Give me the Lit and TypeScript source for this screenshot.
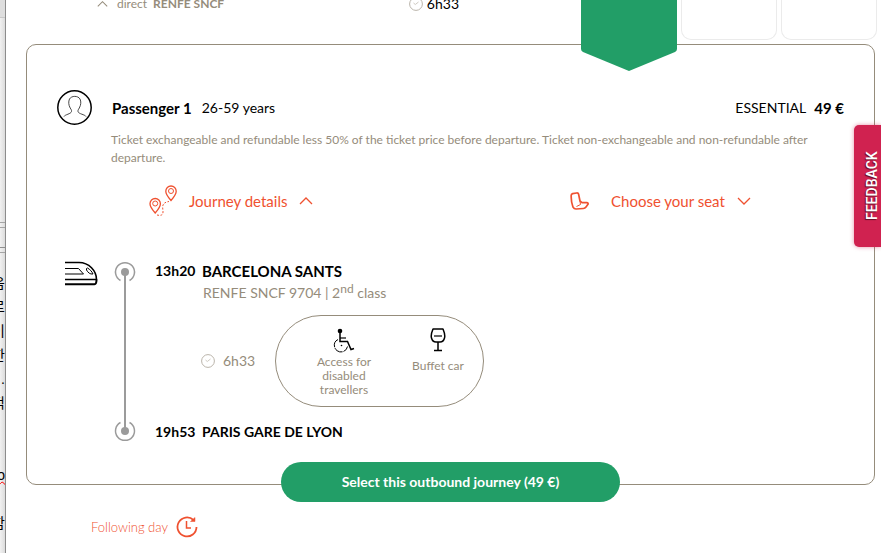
import { LitElement, html, css, svg } from "lit";
import { customElement, property, state } from "lit/decorators.js";

const chevronUp = svg`<path d="M1 7 L7 1 L13 7" fill="none" stroke="currentColor" stroke-width="1.3" />`;
const chevronDown = svg`<path d="M1 1 L7 7 L13 1" fill="none" stroke="currentColor" stroke-width="1.3" />`;

const clock = html`<svg width="14" height="14" viewBox="0 0 14 14" fill="none" stroke="#bab4aa" aria-hidden="true">
  <circle cx="7" cy="7" r="6.4" /><path d="M4.5 6 L6.3 7.5 L9.5 5" stroke="#cfcac2" />
</svg>`;

@customElement("background-window")
export class BackgroundWindow extends LitElement {
  static styles = css`
    :host {
      display: flex;
      flex-direction: column;
      flex: 0 0 6px;
      box-sizing: border-box;
      overflow: hidden;
      border-right: 1px solid #8c8c8c;
      background: linear-gradient(to right, #f1f1f1, #dcdcdc);
      font: 14px/24px "Liberation Sans", "Noto Sans CJK KR", sans-serif;
      color: #000;
    }
    .title { height: 17px; border-bottom: 1px solid #c8c8c8; background: #dedede; }
    .pane { height: 204px; border-bottom: 1px solid #a5a5a5; }
    .bar { height: 4px; border-bottom: 1px solid #a5a5a5; }
    .tools { height: 19px; border-bottom: 1px solid #8f8f8f; }
    .text { display: flex; flex-direction: column; align-items: flex-end; padding-top: 18px; }
    .line { height: 24px; white-space: nowrap; }
    .typo { text-decoration: underline wavy #f00 1px; }
  `;
  render() {
    const lines = ["음", "로", "이", "한", ".", "적", "", "", "To", "", "함"];
    return html`
      <div class="title"></div>
      <div class="pane"></div>
      <div class="bar"></div>
      <div class="tools"></div>
      <div class="bar"></div>
      <div class="text">${lines.map((t) => html`<span class="line ${t === "To" ? "typo" : ""}">${t}</span>`)}</div>
    `;
  }
}

@customElement("stop-line")
export class StopLine extends LitElement {
  @property() time = "";
  @property() place = "";
  static styles = css`
    :host { display: flex; gap: 6px; font-weight: 700; font-size: 14px; line-height: 20px; color: #000; }
    :host([departure]) .place { font-size: 15px; }
    .time { width: 41px; white-space: nowrap; }
  `;
  render() {
    return html`<span class="time">${this.time}</span><span class="place">${this.place}</span>`;
  }
}

@customElement("app-root")
export class AppRoot extends LitElement {
  @state() private open = true;

  static styles = css`
    :host {
      display: flex;
      position: relative;
      min-height: 100vh;
      overflow: hidden;
      background: #fff;
      color: #000;
      font: 14px/18px Lato, "Liberation Sans", sans-serif;
    }
    * { box-sizing: border-box; }
    svg { display: block; flex: none; }
    button {
      font: inherit;
      color: inherit;
      border: 0;
      padding: 0;
      background: none;
      cursor: pointer;
    }
    main { flex: 1; min-width: 0; padding: 0 6px 0 20px; }

    .fares { display: flex; justify-content: space-between; height: 44px; margin-right: -2px; }
    .trip { display: flex; flex: 1; justify-content: space-between; height: 20px; margin: -6px 122px 0 71px; line-height: 20px; }
    .train { display: flex; align-items: center; gap: 9px; font-size: 12px; color: #958c7b; }
    .train .names { display: flex; gap: 6px; }
    .time { display: flex; align-items: center; gap: 4px; }
    .cells { display: flex; gap: 4px; }
    .cell { width: 96px; height: 40px; border: 1px solid #ebebeb; border-top: 0; border-radius: 0 0 10px 10px; }
    .chosen { position: relative; width: 96px; height: 44px; }
    .flag { position: absolute; top: 0; left: 0; }

    .card { border: 1px solid #958c7b; border-radius: 10px; padding-top: 45px; }
    .passenger { display: flex; align-items: center; height: 35px; padding: 0 30px; }
    .who { margin-left: 20px; font-size: 15px; font-weight: 700; }
    .age { margin-left: 10px; flex: 1; }
    .price { margin-left: 8px; font-size: 15px; font-weight: 700; }
    .terms { margin: 6px 30px 0 84px; font-size: 12px; color: #958c7b; }

    .options { display: grid; grid-template-columns: 1fr 1fr; margin: 16px 5px 0 0; color: #ef5130; }
    .option { display: flex; align-items: center; height: 36px; margin-left: 122px; justify-self: start; }
    .option svg:last-child { margin-left: 12px; }
    .option span { font-size: 15px; margin-left: 11px; }
    .seat span { margin-left: 21px; }

    .journey { display: flex; align-items: stretch; padding: 42px 30px 0 37px; }
    .rail { display: flex; flex-direction: column; align-items: center; width: 22px; margin-left: 16px; }
    .rail .bar { flex: 1; width: 2px; background: #9b9b9b; margin: -12px 0; }
    .stops { margin-left: 19px; }
    .service { margin: 2px 0 0 48px; line-height: 20px; color: #958c7b; }
    .service sup { font-size: 12px; line-height: 0; vertical-align: 5px; }
    .middle { display: flex; align-items: center; margin: 12px 0 15px 46px; color: #958c7b; }
    .middle .length { margin-left: 8px; width: 52px; }
    .onboard {
      display: flex;
      width: 209px;
      height: 92px;
      padding: 12px 6px 0 30px;
      border: 1px solid #958c7b;
      border-radius: 46px;
      font-size: 12px;
      line-height: 14px;
      text-align: center;
    }
    .service-item { display: flex; flex-direction: column; align-items: center; width: 76px; gap: 2px; }
    .service-item + .service-item { margin-left: 18px; gap: 7px; }

    .choose {
      display: block;
      width: 40%;
      height: 40px;
      margin: 20px auto -18px;
      border-radius: 20px;
      background: #229e67;
      color: #fff;
      font-weight: 700;
      position: relative;
    }
    .next {
      display: inline-flex;
      align-items: center;
      gap: 8px;
      margin: 31px 0 0 65px;
      color: #ef5130;
      font-size: 13px;
      font-weight: 300;
      text-decoration: none;
    }
    .feedback {
      position: absolute;
      right: 0;
      top: 125px;
      width: 27px;
      height: 122px;
      padding-right: 9px;
      display: flex;
      align-items: center;
      justify-content: center;
      writing-mode: vertical-rl;
      transform: rotate(180deg);
      border-radius: 0 5px 5px 0;
      background: #d02250;
      color: #fff;
      font: 500 14px/18px Roboto, sans-serif;
      box-shadow: 0 0 4px #d0225080;
      text-shadow: -1px -1px 1px #0008;
    }
  `;

  private passengerIcon = html`<svg width="35" height="35" viewBox="0 0 35 35" fill="none" stroke="#000" aria-hidden="true">
    <circle cx="17.5" cy="17.5" r="16.7" stroke-width="1.5" />
    <path stroke="#333" stroke-width="0.9" d="M7 26.5 C8 24.5 14 24 14.5 21.5 C14.8 20 14 19.5 13.2 18 C11.5 15 11.3 11.5 12.5 9 C14.5 5.5 21 5.5 23 9 C24.3 11.5 24 15 22.3 18 C21.5 19.5 20.8 20 21 21.5 C21.5 24 28 24.5 29 26.5" />
  </svg>`;

  private routeIcon = html`<svg width="29" height="32" viewBox="0 0 29 32" fill="none" stroke="currentColor" stroke-width="1.3" aria-hidden="true">
    <path d="M22 15.5 C19 12 16.8 9.5 16.8 6.2 A5.2 5.2 0 0 1 27.2 6.2 C27.2 9.5 25 12 22 15.5 Z" />
    <circle cx="22" cy="6" r="2.5" stroke-width="1" />
    <path d="M6.2 28 C3.2 24.500 1 22 1 18.700 A5.200 5.200 0 0 1 11.400 18.700 C11.400 22 9.200 24.500 6.200 28 Z" />
    <circle cx="6.200" cy="18.500" r="2.500" stroke-width="1" />
    <path d="M8 30 C12 31 14.500 30 14 26 C13.500 22 12.500 17.500 20 16.500" stroke-width="1" stroke-dasharray="2 1.500" />
  </svg>`;

  private seatIcon = html`<svg width="20" height="18" viewBox="0 0 20 18" fill="none" stroke="currentColor" stroke-width="1.700" stroke-linejoin="round" aria-hidden="true">
    <path d="M1.200 4 Q1 2 2.600 1.600 L6.600 1 Q8.300 0.800 8.600 2.200 L10 9 L12 10.600 L16.600 10.600 Q18.800 10.800 17.800 12.600 L16 15 Q15 16.400 13.400 16.500 L6 17 Q4 17 3 15.200 Q1 10 1.200 4 Z" />
    <path d="M10 9.500 L10.500 12.500 L6.500 14.500" stroke-width="1" />
  </svg>`;

  private trainIcon = html`<svg width="34" height="26" viewBox="0 0 34 26" fill="none" stroke="#000" stroke-width="1.600" aria-hidden="true">
    <path d="M1 1.500 H15 C25 1.500 32.500 10 32.500 18.500 H1" />
    <path d="M1 23.200 H30.500 Q32.500 23.200 32.500 18.500" stroke-width="2" />
    <path d="M1 7.500 H14.500 L19.500 13 H1" stroke-width="1" />
    <path d="M23.500 7 C26 8.500 28 10.500 29 13 C26 13.500 24 11.500 22.500 9 Q22 7 23.500 7 Z" stroke-width="1" />
  </svg>`;

  private wheelchair = html`<svg width="22" height="25" viewBox="0 0 22 25" fill="none" stroke="#000" aria-hidden="true">
    <circle cx="7" cy="3" r="2.300" fill="#000" stroke="none" />
    <path d="M7 4 V13.500 H14.500 L18 21.500 L21 20.500" stroke-width="1.500" />
    <path d="M7 10 H13" stroke-width="1.200" />
    <path d="M5 11.500 A6.600 6.600 0 1 0 14.500 18.500" stroke-dasharray="9 1" stroke-width="1" />
    <circle cx="8.500" cy="17.500" r="0.800" fill="#000" stroke="none" />
  </svg>`;

  private glass = html`<svg width="16" height="24" viewBox="0 0 16 24" fill="none" stroke="#000" stroke-width="1.500" aria-hidden="true">
    <path d="M3 1 H13 Q15.500 7 14.500 10 Q13.500 14 10 14 H6 Q2.500 14 1.500 10 Q0.500 7 3 1 Z" stroke-linejoin="round" />
    <path d="M4 8 H12" stroke-width="1.200" />
    <path d="M8 14 V22 M4 22.500 H12" />
  </svg>`;

  private stopIcon(flip: boolean) {
    return html`<svg width="22" height="22" viewBox="0 0 22 22" fill="none" stroke="#9b9b9b" stroke-width="1.500" aria-hidden="true">
      <path d=${flip ? "M6.500 2.500 A9.500 9.500 0 1 0 15.500 2.500" : "M6.500 19.500 A9.500 9.500 0 1 1 15.500 19.500"} />
      <circle cx="11" cy="11" r="4" fill="#9b9b9b" stroke="none" />
    </svg>`;
  }

  render() {
    return html`
      <background-window></background-window>
      <main>
        <div class="fares">
          <div class="trip">
            <div class="train">
              <svg width="11" height="8" viewBox="0 0 14 8" aria-hidden="true">${chevronUp}</svg>
              <span class="names"><span>direct</span><b>RENFE SNCF</b></span>
            </div>
            <div class="time">${clock}<span>6h33</span></div>
          </div>
          <div class="cells">
            <div class="chosen">
              <svg class="flag" width="96" height="71" viewBox="0 0 96 71" aria-hidden="true">
                <path d="M0 0 H96 V49 Q96 51 94 52 L48 71 L2 52 Q0 51 0 49 Z" fill="#229e67" />
              </svg>
            </div>
            <div class="cell"></div>
            <div class="cell"></div>
          </div>
        </div>

        <section class="card">
          <div class="passenger">
            ${this.passengerIcon}
            <span class="who">Passenger 1</span><span class="age">26-59 years</span>
            <span>ESSENTIAL</span><span class="price">49 €</span>
          </div>
          <p class="terms">Ticket exchangeable and refundable less 50% of the ticket price before departure. Ticket non-exchangeable and non-refundable after departure.</p>

          <div class="options">
            <button class="option" aria-expanded=${this.open} @click=${() => (this.open = !this.open)}>
              ${this.routeIcon}<span>Journey details</span>
              <svg width="14" height="8" viewBox="0 0 14 8" aria-hidden="true">${this.open ? chevronUp : chevronDown}</svg>
            </button>
            <button class="option seat">
              ${this.seatIcon}<span>Choose your seat</span>
              <svg width="14" height="8" viewBox="0 0 14 8" aria-hidden="true">${chevronDown}</svg>
            </button>
          </div>

          ${this.open
            ? html`<div class="journey">
                ${this.trainIcon}
                <div class="rail">${this.stopIcon(false)}<div class="bar"></div>${this.stopIcon(true)}</div>
                <div class="stops">
                  <stop-line departure time="13h20" place="BARCELONA SANTS"></stop-line>
                  <div class="service">RENFE SNCF 9704 | 2<sup>nd</sup> class</div>
                  <div class="middle">
                    ${clock}<span class="length">6h33</span>
                    <div class="onboard">
                      <div class="service-item">${this.wheelchair}<span>Access for disabled travellers</span></div>
                      <div class="service-item">${this.glass}<span>Buffet car</span></div>
                    </div>
                  </div>
                  <stop-line time="19h53" place="PARIS GARE DE LYON"></stop-line>
                </div>
              </div>`
            : ""}
          <button class="choose">Select this outbound journey (49 €)</button>
        </section>

        <a class="next" href="#next">Following day
          <svg width="22" height="22" viewBox="0 0 22 22" fill="none" stroke="currentColor" stroke-width="1.800" aria-hidden="true">
            <path d="M17.500 4 A9.500 9.500 0 1 0 20.500 11" />
            <path d="M19 1.500 V5.500 H14.500 Z" fill="currentColor" stroke-width="0.500" />
            <path d="M10.500 5 V12 H15" stroke-width="1.500" />
          </svg>
        </a>
      </main>
      <button class="feedback">FEEDBACK</button>
    `;
  }
}
